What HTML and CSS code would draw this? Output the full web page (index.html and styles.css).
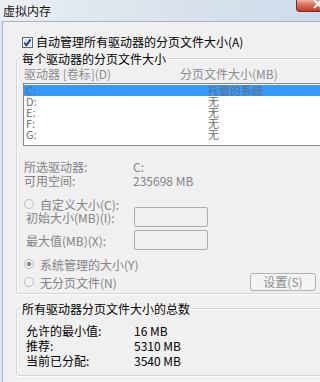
FILE: index.html
```html
<!DOCTYPE html>
<html lang="zh-CN">
<head>
<meta charset="UTF-8">
<title>虚拟内存</title>
<link rel="stylesheet" href="styles.css">
</head>
<body>

<div class="window">
  <div class="titlebar">
    <span class="title">虚拟内存</span>
    <div class="close-btn">
      <svg width="44" height="12" viewBox="0 0 44 12"><path d="M17 1 L25 9 M25 1 L17 9" stroke="#fff" stroke-width="2" fill="none"/></svg>
    </div>
  </div>
  <div class="frame">
    <div class="panel">
      <div class="auto-row">
        <svg class="checkbox" width="11" height="11" viewBox="0 0 11 11">
          <rect x="0.5" y="0.5" width="10" height="10" fill="#f6f7f9" stroke="#5a6b80"/>
          <rect x="2" y="2" width="7" height="7" fill="#e3e9f0"/>
          <path d="M2.3 5.6 L4.4 8.2 L8.6 2.4" stroke="#1d3a86" stroke-width="1.8" fill="none"/>
        </svg>
        <span>自动管理所有驱动器的分页文件大小(A)</span>
      </div>

      <fieldset class="group drives">
        <legend>每个驱动器的分页文件大小</legend>
        <div class="list-head">
          <span class="head-drive">驱动器 [卷标](D)</span>
          <span>分页文件大小(MB)</span>
        </div>
        <ul class="drive-list">
          <li class="selected"><span class="col-drive">C:</span><span>托管的系统</span></li>
          <li><span class="col-drive">D:</span><span>无</span></li>
          <li><span class="col-drive">E:</span><span>无</span></li>
          <li><span class="col-drive">F:</span><span>无</span></li>
          <li><span class="col-drive">G:</span><span>无</span></li>
        </ul>
        <div class="info">
          <div class="info-row"><span class="info-label">所选驱动器:</span><span>C:</span></div>
          <div class="info-row"><span class="info-label">可用空间:</span><span>235698 MB</span></div>
        </div>
        <div class="radio-row custom">
          <svg class="radio" width="10" height="10" viewBox="0 0 10 10"><circle cx="5" cy="5" r="4.5" fill="#f2f2f2" stroke="#bcbcbc"/></svg>
          <span>自定义大小(C):</span>
        </div>
        <div class="size-row first">
          <span class="size-label">初始大小(MB)(I):</span>
          <span class="size-input"></span>
        </div>
        <div class="size-row">
          <span class="size-label">最大值(MB)(X):</span>
          <span class="size-input"></span>
        </div>
        <div class="radio-row system">
          <svg class="radio" width="10" height="10" viewBox="0 0 10 10"><circle cx="5" cy="5" r="4.5" fill="#f2f2f2" stroke="#b4b4b4"/><circle cx="5" cy="5" r="2.3" fill="#8d8d8d"/></svg>
          <span>系统管理的大小(Y)</span>
        </div>
        <div class="radio-row last">
          <svg class="radio" width="10" height="10" viewBox="0 0 10 10"><circle cx="5" cy="5" r="4.5" fill="#f2f2f2" stroke="#bcbcbc"/></svg>
          <span>无分页文件(N)</span>
          <button class="set-btn" disabled>设置(S)</button>
        </div>
      </fieldset>

      <fieldset class="group totals">
        <legend>所有驱动器分页文件大小的总数</legend>
        <div class="total-row"><span class="total-label">允许的最小值:</span><span>16 MB</span></div>
        <div class="total-row"><span class="total-label">推荐:</span><span>5310 MB</span></div>
        <div class="total-row"><span class="total-label">当前已分配:</span><span>3540 MB</span></div>
      </fieldset>
    </div>
  </div>
</div>

</body>
</html>
```

FILE: styles.css
```css
body {
  margin: 0;
  width: 320px;
  height: 382px;
  overflow: hidden;
  font-family: "Noto Sans CJK SC", "Noto Sans", sans-serif;
  font-size: 12px;
  color: #000;
  background-color: #dfe8f2;
}
.window {
  width: 340px;
}
.titlebar {
  height: 21px;
  display: flex;
  align-items: flex-start;
  background: linear-gradient(to right, #eaeff5 0%, #dee5ed 35%, #d6e0ea 65%, #cadbed 100%);
}
.title {
  padding: 3px 0 0 3px;
  line-height: 15px;
  font-size: 12px;
  color: #111;
  text-shadow: 0 0 4px #fff;
}
.close-btn {
  margin-left: auto;
  width: 44px;
  height: 12px;
  box-sizing: border-box;
  border: 1px solid #7b2a1e;
  border-top: none;
  border-radius: 0 0 4px 4px;
  background: linear-gradient(#ecb0a2, #d46a55 50%, #c03b26);
}
.close-btn svg {
  display: block;
  margin-top: -1px;
}
.frame {
  padding-left: 2px;
}
.panel {
  height: 361px;
  background-color: #f0f0f0;
  border-left: 1px solid #9db3cf;
  border-top: 1px solid #a6b4c4;
  padding-top: 13px;
  box-sizing: border-box;
}
.auto-row {
  height: 14px;
  line-height: 14px;
  padding-left: 19px;
  display: flex;
  align-items: center;
  gap: 3px;
}
.checkbox {
  display: block;
  flex: none;
}
.group {
  margin: 0 8px 0 13px;
  min-inline-size: 0;
  border: 1px solid #d0d7dc;
  border-radius: 3px;
  box-shadow: inset 1px 1px 0 #fff, 1px 1px 0 #fff;
}
.group legend {
  padding: 0 1px;
  line-height: 13px;
  height: 13px;
  color: #000;
}
.drives {
  margin-top: 3px;
  padding: 0 15px 2px 7px;
  color: #838383;
}
.drives legend {
  margin-left: -3px;
}
.list-head {
  margin-top: 2px;
  height: 13px;
  line-height: 13px;
  display: flex;
  color: #8c8c8c;
}
.head-drive {
  width: 156px;
}
.drive-list {
  list-style: none;
  margin: 3px -10px 0 -1px;
  padding: 1px 0 5px 0;
  border: 1px solid #828790;
  background-color: #fff;
  color: #6d6d6d;
  font-size: 11px;
}
.drive-list li {
  height: 11px;
  line-height: 11px;
  padding-left: 2px;
  display: flex;
}
.drive-list li.selected {
  background-color: #3399ff;
  color: #5f6f80;
}
.col-drive {
  width: 182px;
}
.info {
  margin-top: 14px;
}
.info-row {
  height: 14px;
  line-height: 14px;
  display: flex;
}
.info-label {
  width: 109px;
}
.radio-row {
  display: flex;
  align-items: center;
  gap: 6px;
}
.radio {
  display: block;
  flex: none;
}
.custom {
  margin-top: 10px;
  height: 12px;
}
.system {
  margin-top: 7px;
  height: 14px;
}
.last {
  margin-top: 2px;
  height: 18px;
}
.size-row {
  margin-top: 3px;
  height: 20px;
  display: flex;
  align-items: center;
}
.size-row.first {
  margin-top: -3px;
}
.size-label {
  width: 108px;
  padding-left: 2px;
}
.size-input {
  width: 74px;
  height: 20px;
  box-sizing: border-box;
  border: 1px solid #adadad;
  border-radius: 2px;
  background-color: #f0f0f0;
}
.set-btn {
  margin-left: auto;
  width: 66px;
  height: 18px;
  padding: 0;
  font-family: inherit;
  font-size: 12px;
  line-height: 16px;
  color: #8a8a8a;
  background-color: #f4f4f4;
  border: 1px solid #adb2b5;
  border-radius: 3px;
}
.totals {
  margin-top: 8px;
  padding: 8px 15px 7px 9px;
}
.totals legend {
  margin-left: -5px;
}
.total-row {
  height: 15px;
  line-height: 15px;
  display: flex;
}
.total-label {
  width: 108px;
}
```
